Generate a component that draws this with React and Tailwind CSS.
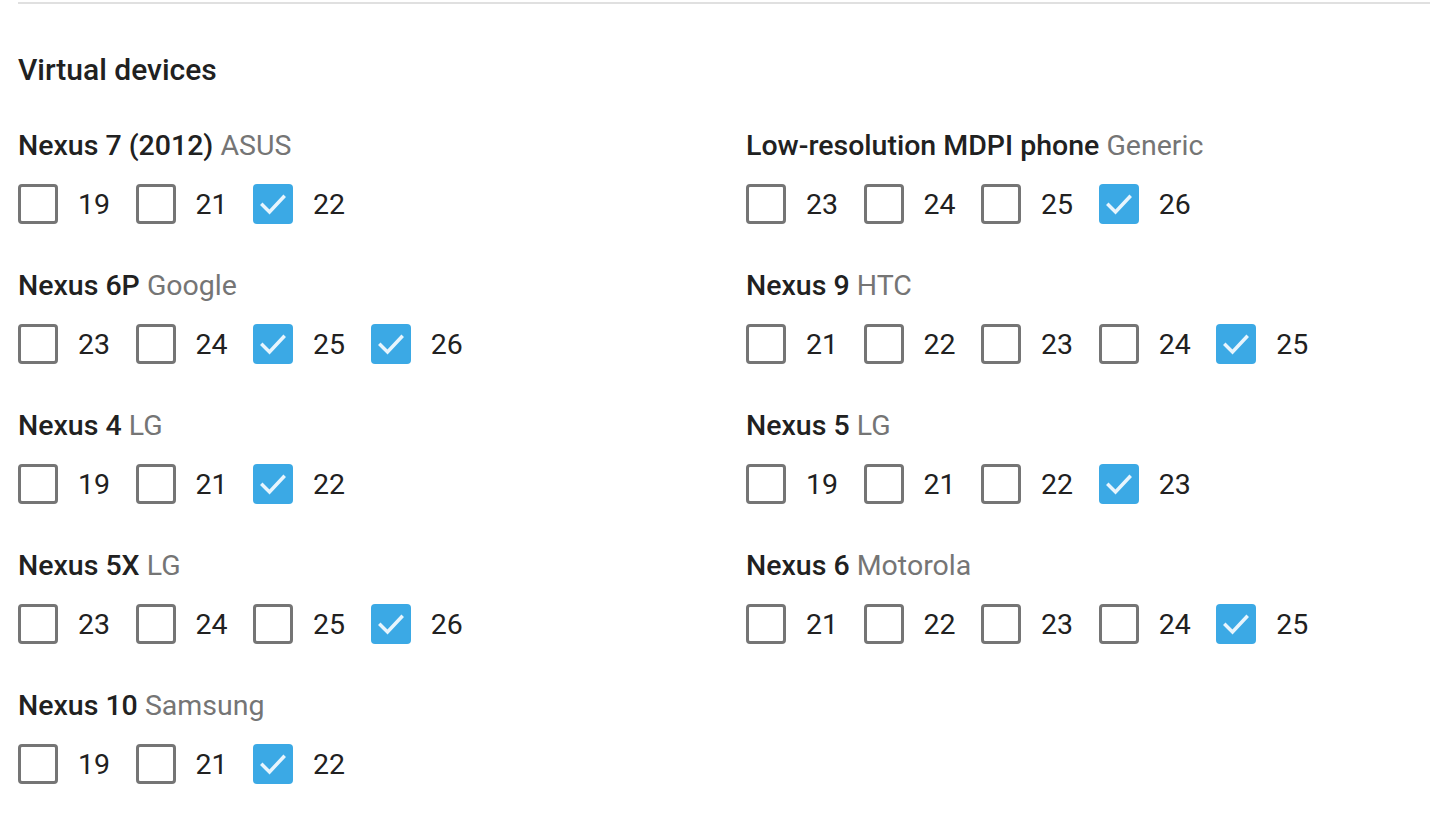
import React from "react";

const devices = [
  { name: "Nexus 7 (2012)", vendor: "ASUS", apis: [19, 21, 22], on: [22] },
  { name: "Low-resolution MDPI phone", vendor: "Generic", apis: [23, 24, 25, 26], on: [26] },
  { name: "Nexus 6P", vendor: "Google", apis: [23, 24, 25, 26], on: [25, 26] },
  { name: "Nexus 9", vendor: "HTC", apis: [21, 22, 23, 24, 25], on: [25] },
  { name: "Nexus 4", vendor: "LG", apis: [19, 21, 22], on: [22] },
  { name: "Nexus 5", vendor: "LG", apis: [19, 21, 22, 23], on: [23] },
  { name: "Nexus 5X", vendor: "LG", apis: [23, 24, 25, 26], on: [26] },
  { name: "Nexus 6", vendor: "Motorola", apis: [21, 22, 23, 24, 25], on: [25] },
  { name: "Nexus 10", vendor: "Samsung", apis: [19, 21, 22], on: [22] },
];

function Checkbox({ checked }) {
  if (checked) {
    return (
      <span className="flex h-10 w-10 shrink-0 items-center justify-center rounded-[4px] bg-[#3ba9e5]">
        <svg width="40" height="40" viewBox="0 0 40 40" fill="none">
          <path
            d="M9.5 21 L16.5 28 L30.5 13"
            stroke="#e8f5fd"
            strokeWidth="3.5"
            strokeLinecap="square"
          />
        </svg>
      </span>
    );
  }
  return <span className="block h-10 w-10 shrink-0 rounded-[4px] border-[3px] border-[#757575] bg-white" />;
}

function Device({ d }) {
  return (
    <div>
      <p className="text-[28.5px] leading-[32px] font-medium text-[#212121]">
        {d.name} <span className="font-normal text-[#757575]">{d.vendor}</span>
      </p>
      <div className="mt-[22px] flex h-10 items-center">
        {d.apis.map((api) => (
          <label key={api} className="flex items-center">
            <Checkbox checked={d.on.includes(api)} />
            <span className="ml-5 mr-[25.5px] mt-[2px] text-[28.5px] leading-[32px] text-[#212121]">{api}</span>
          </label>
        ))}
      </div>
    </div>
  );
}

export default function App() {
  return (
    <div className="h-[834px] w-[1430px] overflow-hidden bg-white font-['Roboto',sans-serif] pl-[18px] pt-[2px]">
      <div className="h-[2px] bg-[#e0e0e0]" />
      <h2 className="mt-12 text-[30px] leading-9 font-medium text-[#212121]">Virtual devices</h2>
      <div className="mt-[42px] grid grid-cols-[728px_1fr] gap-y-[46px]">
        {devices.map((d) => (
          <Device key={d.name} d={d} />
        ))}
      </div>
    </div>
  );
}
